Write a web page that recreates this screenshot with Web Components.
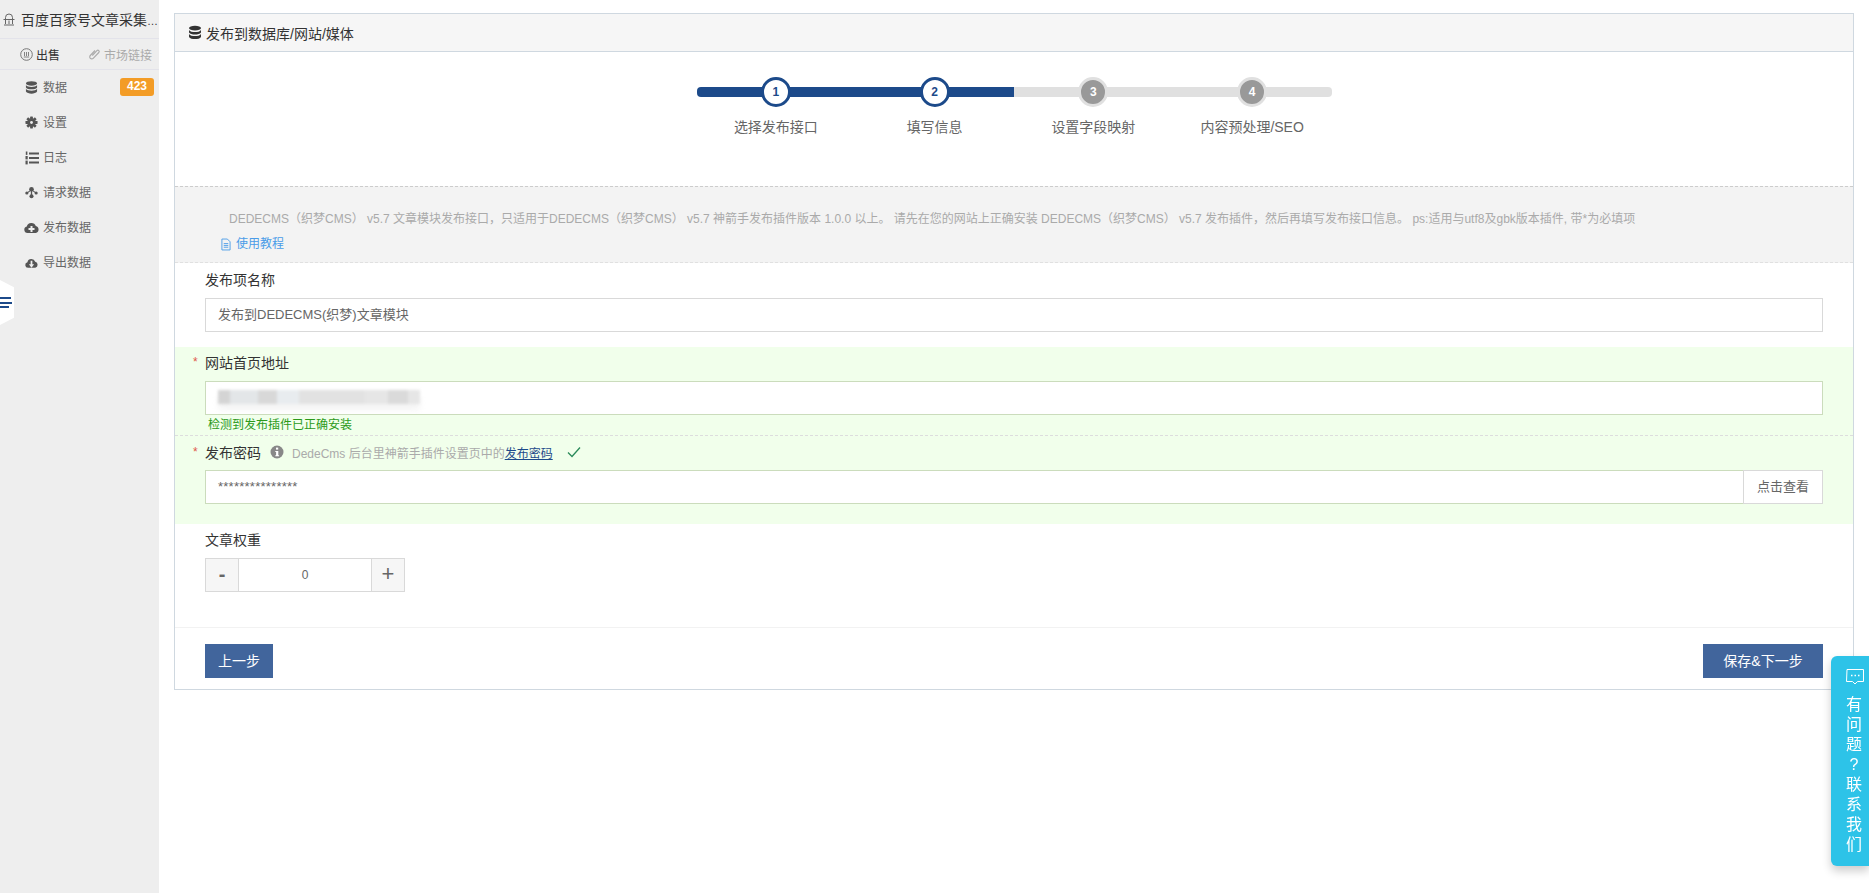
<!DOCTYPE html>
<html lang="zh">
<head>
<meta charset="utf-8">
<title>发布到数据库/网站/媒体</title>
<style>
    html, body { margin: 0; height: 100%; background: #fff; }
    body { font-family: "Liberation Sans", "Noto Sans CJK SC", sans-serif; font-size: 13px; color: #333; overflow: hidden; }
</style>
</head>
<body>
<app-shell>
    <app-sidebar slot="side">
        <span slot="title">百度百家号文章采集<small style="font-size:11px">…</small></span>
        <nav-item label="数据" badge="423">
            <svg slot="icon" viewBox="0 0 14 14" width="13" height="13" fill="#555"><ellipse cx="7" cy="2.600" rx="6" ry="2.400"/><path d="M1 4.400C2 6 4.500 6.500 7 6.500S12 6 13 4.400V7c-1 1.500-3.500 2-6 2S2 8.500 1 7z"/><path d="M1 8.400c1 1.600 3.500 2.100 6 2.100s5-.5 6-2.100V11.400c-1 1.500-3.500 2.200-6 2.200s-5-.7-6-2.200z"/></svg>
        </nav-item>
        <nav-item label="设置">
            <svg slot="icon" viewBox="0 0 14 14" width="13" height="13"><g fill="#555"><rect x="5.500" y="0.500" width="3" height="13" rx=".5"/><rect x="5.500" y="0.500" width="3" height="13" rx=".5" transform="rotate(45 7 7)"/><rect x="5.500" y="0.500" width="3" height="13" rx=".5" transform="rotate(90 7 7)"/><rect x="5.500" y="0.500" width="3" height="13" rx=".5" transform="rotate(135 7 7)"/></g><circle cx="7" cy="7" r="3.400" fill="none" stroke="#555" stroke-width="2.200"/><circle cx="7" cy="7" r="1.500" fill="#eee"/></svg>
        </nav-item>
        <nav-item label="日志">
            <svg slot="icon" viewBox="0 0 14 14" width="14" height="14"><g fill="#555"><rect x="4" y="1.500" width="10" height="2"/><rect x="4" y="6" width="10" height="2"/><rect x="4" y="10.500" width="10" height="2"/><rect x="0.800" y="0.500" width="1.600" height="3.400"/><rect x="0.500" y="5" width="2.200" height="3.400"/><rect x="0.500" y="9.600" width="2.200" height="3.800"/></g></svg>
        </nav-item>
        <nav-item label="请求数据">
            <svg slot="icon" viewBox="0 0 14 14" width="13" height="13" fill="#555"><circle cx="7" cy="3.500" r="2.500"/><circle cx="2" cy="7.500" r="1.700"/><circle cx="12" cy="7.500" r="1.700"/><circle cx="7" cy="11" r="2.200"/><path d="M6.300 4h1.400v7H6.300zM2 7l5-3.500.6.900-5 3.500zM12 7L7 3.500l-.6.900 5 3.500z"/></svg>
        </nav-item>
        <nav-item label="发布数据">
            <svg slot="icon" viewBox="0 0 15 13" width="15" height="13"><path fill="#555" d="M3.500 12A3.300 3.300 0 0 1 2.800 5.500 4.700 4.700 0 0 1 11.800 5 3.600 3.600 0 0 1 11.800 12z"/><path fill="#eee" d="M6.500 5h2v2h2v2h-2v2h-2V9h-2V7h2z"/></svg>
        </nav-item>
        <nav-item label="导出数据">
            <svg slot="icon" viewBox="0 0 15 13" width="13" height="12"><path fill="#555" d="M3.500 12A3.300 3.300 0 0 1 2.800 5.500 4.700 4.700 0 0 1 11.800 5 3.600 3.600 0 0 1 11.800 12z"/><path fill="#eee" d="M6.500 4h2v4h2l-3 4-3-4h2z"/></svg>
        </nav-item>
    </app-sidebar>

    <publish-card>
        <svg slot="head-icon" viewBox="0 0 14 14" width="14" height="15" fill="#333"><ellipse cx="7" cy="2.600" rx="6" ry="2.400"/><path d="M1 4.400C2 6 4.500 6.500 7 6.500S12 6 13 4.400V7c-1 1.500-3.500 2-6 2S2 8.500 1 7z"/><path d="M1 8.400c1 1.600 3.500 2.100 6 2.100s5-.5 6-2.100V11.400c-1 1.500-3.500 2.200-6 2.200s-5-.7-6-2.200z"/></svg>
        <span slot="head">发布到数据库/网站/媒体</span>

        <step-bar slot="steps">
            <step-item num="1" label="选择发布接口" done first></step-item>
            <step-item num="2" label="填写信息" done></step-item>
            <step-item num="3" label="设置字段映射"></step-item>
            <step-item num="4" label="内容预处理/SEO" last></step-item>
        </step-bar>

        <info-note slot="note">
            DEDECMS（织梦CMS） v5.7 文章模块发布接口，只适用于DEDECMS（织梦CMS） v5.7 神箭手发布插件版本 1.0.0 以上。 请先在您的网站上正确安装 DEDECMS（织梦CMS） v5.7 发布插件，然后再填写发布接口信息。 ps:适用与utf8及gbk版本插件, 带*为必填项
            <span slot="link">使用教程</span>
        </info-note>

        <form-field style="--pad: 6px 30px 15px; --gap: 9px">
            <span slot="label">发布项名称</span>
            <text-box>发布到DEDECMS(织梦)文章模块</text-box>
        </form-field>

        <ok-group>
            <form-field required style="--pad: 5px 30px 0; --gap: 9px; --box-border: #cbdcbc">
                <span slot="label">网站首页地址</span>
                <text-box><blur-url></blur-url></text-box>
                <span slot="hint">检测到发布插件已正确安装</span>
            </form-field>
            <form-field required divided style="--pad: 6px 30px 20px; --gap: 8px; --box-border: #cbdcbc">
                <span slot="label">发布密码</span>
                <field-tip slot="tip">DedeCms 后台里神箭手插件设置页中的<u>发布密码</u></field-tip>
                <text-box addon="点击查看"><span style="letter-spacing:.25px">***************</span></text-box>
            </form-field>
        </ok-group>

        <form-field style="--pad: 5px 30px 0; --gap: 9px">
            <span slot="label">文章权重</span>
            <num-stepper value="0"></num-stepper>
        </form-field>

        <wizard-foot slot="foot">
            <flat-button>上一步</flat-button>
            <flat-button wide>保存&amp;下一步</flat-button>
        </wizard-foot>
    </publish-card>
</app-shell>
<help-float></help-float>

<script>
class AppShell extends HTMLElement {
    constructor () {
        super();
        this.attachShadow( { mode: "open" } );
        this.shadowRoot.innerHTML = `
            <style>
                :host {
                    display: grid;
                    grid-template-columns: 159px 1fr;
                    height: 893px;
                }
                main {
                    padding: 13px 15px 0;
                    min-width: 0;
                }
            </style>
            <slot name="side"></slot>
            <main><slot></slot></main>
        `;
    }
}
customElements.define( "app-shell", AppShell );

class AppSidebar extends HTMLElement {
    constructor () {
        super();
        this.attachShadow( { mode: "open" } );
        this.shadowRoot.innerHTML = `
            <style>
                :host {
                    display: block;
                    position: relative;
                    background: #eee;
                    font-size: 12px;
                }
                #title {
                    display: flex;
                    align-items: center;
                    gap: 6px;
                    height: 38px;
                    padding-left: 3px;
                    border-bottom: 1px solid #e3e3ea;
                    font-size: 14px;
                    color: #333;
                }
                #title svg { flex: none; }
                #title div { white-space: nowrap; }
                #tabs {
                    display: flex;
                    align-items: center;
                    height: 30px;
                    padding-left: 20px;
                    border-bottom: 1px solid #e3e3ea;
                }
                #tabs span {
                    display: flex;
                    align-items: center;
                    gap: 3px;
                }
                #sell { color: #333; font-size: 12px; width: 68px; }
                #market { color: #aaa; }
                #toggle {
                    position: absolute;
                    left: 0;
                    top: 280px;
                    width: 14px;
                    height: 45px;
                    background: #fff;
                    clip-path: polygon(0 0, 100% 16%, 100% 84%, 0 100%);
                }
                #toggle i {
                    position: absolute;
                    left: 0;
                    height: 2px;
                    background: #1c4a8a;
                }
            </style>
            <div id="title">
                <svg viewBox="0 0 12 13" width="12" height="13" fill="none" stroke="#666" stroke-width="1"><path d="M2.500 6V4.500a3.500 3.500 0 0 1 7 0V6"/><path d="M.5 6.500h11M2.500 7v4M6 7.500V11M9.500 7v4M1 12h10"/></svg>
                <div><slot name="title"></slot></div>
            </div>
            <div id="tabs">
                <span id="sell">
                    <svg viewBox="0 0 13 13" width="13" height="13" fill="none" stroke="#777"><circle cx="6.500" cy="6.500" r="5.800"/><path d="M4.500 4v4M6.500 4v4M8.500 4v4M3.800 9h5.400" stroke-width=".9"/></svg>
                    出售
                </span>
                <span id="market">
                    <svg viewBox="0 0 13 13" width="13" height="13" fill="none" stroke="#aaa" stroke-width="1.100"><path d="M7 2.500 2.300 7.500a2 2 0 0 0 2.900 2.800l5.600-5.800a1.300 1.300 0 0 0-1.900-1.900L4.300 7.500"/></svg>
                    市场链接
                </span>
            </div>
            <slot></slot>
            <div id="toggle">
                <i style="top:17px;width:11px"></i>
                <i style="top:22px;width:12px"></i>
                <i style="top:26px;width:9px"></i>
            </div>
        `;
    }
}
customElements.define( "app-sidebar", AppSidebar );

class NavItem extends HTMLElement {
    constructor () {
        super();
        this.attachShadow( { mode: "open" } );
        this.shadowRoot.innerHTML = `
            <style>
                :host {
                    display: flex;
                    align-items: center;
                    height: 35px;
                    padding: 0 5px 0 24px;
                    color: #666;
                    font-size: 12px;
                }
                #icon {
                    display: flex;
                    justify-content: center;
                    width: 15px;
                    margin-right: 4px;
                }
                #label { flex: 1; margin-top: -2px; }
                #badge {
                    width: 34px;
                    height: 18px;
                    margin-top: -1px;
                    border-radius: 3px;
                    background: #f39c26;
                    color: #fff;
                    font-weight: bold;
                    line-height: 17px;
                    text-align: center;
                }
                #badge:empty { display: none; }
            </style>
            <span id="icon"><slot name="icon"></slot></span>
            <span id="label"></span>
            <span id="badge"></span>
        `;
    }

    connectedCallback() {
        this.shadowRoot.getElementById( "label" ).textContent = this.getAttribute( "label" );
        this.shadowRoot.getElementById( "badge" ).textContent = this.getAttribute( "badge" ) || "";
    }
}
customElements.define( "nav-item", NavItem );

class PublishCard extends HTMLElement {
    constructor () {
        super();
        this.attachShadow( { mode: "open" } );
        this.shadowRoot.innerHTML = `
            <style>
                :host {
                    display: block;
                    border: 1px solid #cfd8e0;
                    background: #fff;
                }
                header {
                    display: flex;
                    align-items: center;
                    gap: 4px;
                    height: 37px;
                    padding-left: 13px;
                    border-bottom: 1px solid #cfd8e0;
                    background: #f6f6f6;
                    font-size: 14px;
                    color: #333;
                }
            </style>
            <header><slot name="head-icon"></slot><slot name="head"></slot></header>
            <slot name="steps"></slot>
            <slot name="note"></slot>
            <slot></slot>
            <slot name="foot"></slot>
        `;
    }
}
customElements.define( "publish-card", PublishCard );

class StepBar extends HTMLElement {
    constructor () {
        super();
        this.attachShadow( { mode: "open" } );
        this.shadowRoot.innerHTML = `
            <style>
                :host {
                    display: flex;
                    justify-content: center;
                    height: 109px;
                    padding-top: 25px;
                }
            </style>
            <slot></slot>
        `;
    }
}
customElements.define( "step-bar", StepBar );

class StepItem extends HTMLElement {
    constructor () {
        super();
        this.attachShadow( { mode: "open" } );
        this.shadowRoot.innerHTML = `
            <style>
                :host {
                    display: block;
                    width: 158.750px;
                    --line: #e0e0e0;
                    --ring: #e0e0e0;
                    --fill: #999;
                    --num: #fff;
                }
                :host([done]) {
                    --line: #1c4a8a;
                    --ring: #1c4a8a;
                    --fill: #fff;
                    --num: #1c4a8a;
                }
                #bar {
                    position: relative;
                    display: flex;
                    justify-content: center;
                    height: 30px;
                }
                #bar::before {
                    content: "";
                    position: absolute;
                    left: 0;
                    right: 0;
                    top: 10px;
                    height: 10px;
                    background: var(--line);
                }
                :host([first]) #bar::before { border-radius: 4px 0 0 4px; }
                :host([last]) #bar::before { border-radius: 0 4px 4px 0; }
                #dot {
                    position: relative;
                    box-sizing: border-box;
                    width: 30px;
                    height: 30px;
                    border: 3px solid var(--ring);
                    border-radius: 50%;
                    background: var(--fill);
                    color: var(--num);
                    font-size: 12px;
                    font-weight: bold;
                    line-height: 24px;
                    text-align: center;
                }
                #label {
                    margin-top: 9px;
                    font-size: 14px;
                    line-height: 22px;
                    color: #666;
                    text-align: center;
                }
            </style>
            <div id="bar"><div id="dot"></div></div>
            <div id="label"></div>
        `;
    }

    connectedCallback() {
        this.shadowRoot.getElementById( "dot" ).textContent = this.getAttribute( "num" );
        this.shadowRoot.getElementById( "label" ).textContent = this.getAttribute( "label" );
    }
}
customElements.define( "step-item", StepItem );

class InfoNote extends HTMLElement {
    constructor () {
        super();
        this.attachShadow( { mode: "open" } );
        this.shadowRoot.innerHTML = `
            <style>
                :host {
                    display: block;
                    box-sizing: border-box;
                    height: 77px;
                    padding: 22px 0 0 54px;
                    border-top: 1px dashed #ccc;
                    border-bottom: 1px dashed #e0e0e0;
                    background: #f3f3f3;
                    font-size: 12px;
                    line-height: 20px;
                    color: #aaa;
                }
                #link {
                    display: flex;
                    align-items: center;
                    gap: 5px;
                    margin: 5px 0 0 -8px;
                    color: #4a9ce8;
                }
            </style>
            <div><slot></slot></div>
            <div id="link">
                <svg viewBox="0 0 11 13" width="10" height="13" fill="none" stroke="#4a9ce8"><path d="M1 .5h6l3 3v9H1zM3 5.500h5M3 7.500h5M3 9.500h5"/></svg>
                <slot name="link"></slot>
            </div>
        `;
    }
}
customElements.define( "info-note", InfoNote );

class FormField extends HTMLElement {
    constructor () {
        super();
        this.attachShadow( { mode: "open" } );
        this.shadowRoot.innerHTML = `
            <style>
                :host {
                    display: block;
                    position: relative;
                    padding: var(--pad, 8px 30px);
                    font-size: 14px;
                    color: #333;
                }
                :host([divided]) { border-top: 1px dashed #ddd; }
                #head {
                    display: flex;
                    align-items: center;
                    height: 20px;
                    margin-bottom: var(--gap, 8px);
                }
                #star {
                    display: none;
                    position: absolute;
                    left: 18px;
                    color: #e0584a;
                    font-size: 12px;
                }
                :host([required]) #star { display: block; }
                #hint {
                    display: block;
                    padding-left: 3px;
                    font-size: 12px;
                    line-height: 20px;
                    color: #2b9a1a;
                }
                #hint slot { display: block; }
                #hintwrap:not(.on) { display: none; }
            </style>
            <div id="head"><span id="star">*</span><slot name="label"></slot><slot name="tip"></slot></div>
            <slot></slot>
            <div id="hintwrap"><div id="hint"><slot name="hint"></slot></div></div>
        `;
    }

    connectedCallback() {
        if ( this.querySelector( "[slot=hint]" ) ) {
            this.shadowRoot.getElementById( "hintwrap" ).classList.add( "on" );
        }
    }
}
customElements.define( "form-field", FormField );

class FieldTip extends HTMLElement {
    constructor () {
        super();
        this.attachShadow( { mode: "open" } );
        this.shadowRoot.innerHTML = `
            <style>
                :host {
                    display: flex;
                    align-items: center;
                    margin-left: 9px;
                    font-size: 12px;
                    color: #aaa;
                }
                svg { flex: none; }
                #text { margin-left: 8px; }
                ::slotted(u) { color: #1c4a8a; }
                #ok { margin-left: 14px; }
            </style>
            <svg viewBox="0 0 14 14" width="14" height="14"><circle cx="7" cy="7" r="6.500" fill="#888"/><rect x="6" y="2.600" width="2.200" height="2" fill="#fff"/><path fill="#fff" d="M5.300 6h3v4.300h.8v1H5.300v-1h.8V7h-.8z"/></svg>
            <span id="text"><slot></slot></span>
            <svg id="ok" viewBox="0 0 14 12" width="14" height="12" fill="none" stroke="#2a8a5a" stroke-width="1.300"><path d="M1 6.500 5 10.500 13 1.500"/></svg>
        `;
    }
}
customElements.define( "field-tip", FieldTip );

class TextBox extends HTMLElement {
    constructor () {
        super();
        this.attachShadow( { mode: "open" } );
        this.shadowRoot.innerHTML = `
            <style>
                :host {
                    display: flex;
                    box-sizing: border-box;
                    height: 34px;
                    border: 1px solid var(--box-border, #d9d9d9);
                    background: #fff;
                    font-size: 13px;
                    color: #666;
                }
                #value {
                    flex: 1;
                    padding-left: 12px;
                    line-height: 31px;
                    overflow: hidden;
                }
                #addon {
                    flex: none;
                    box-sizing: border-box;
                    width: 80px;
                    margin: -1px -1px -1px 0;
                    height: 34px;
                    border: 1px solid #d9d9d9;
                    line-height: 31px;
                    text-align: center;
                }
                #addon:empty { display: none; }
            </style>
            <div id="value"><slot></slot></div>
            <div id="addon"></div>
        `;
    }

    connectedCallback() {
        this.shadowRoot.getElementById( "addon" ).textContent = this.getAttribute( "addon" ) || "";
    }
}
customElements.define( "text-box", TextBox );

class BlurUrl extends HTMLElement {
    constructor () {
        super();
        this.attachShadow( { mode: "open" } );
        this.shadowRoot.innerHTML = `
            <style>
                :host {
                    display: inline-block;
                    vertical-align: top;
                    width: 202px;
                    height: 14px;
                    margin-top: 8px;
                    filter: blur(1.500px);
                    background: linear-gradient(90deg, #d4d4d4 0 6%, #e3e6e8 6% 20%, #d8d8d8 20% 29%, #e8ecef 29% 40%, #e2e2e2 40% 73%, #e6e6e6 73% 84%, #dadada 84% 94%, #e6e6e6 94% 100%);
                    box-shadow: 0 6px 6px #f4f4f4;
                }
            </style>
        `;
    }
}
customElements.define( "blur-url", BlurUrl );

class OkGroup extends HTMLElement {
    constructor () {
        super();
        this.attachShadow( { mode: "open" } );
        this.shadowRoot.innerHTML = `
            <style>
                :host {
                    display: block;
                    background: #f1ffeb;
                }
            </style>
            <slot></slot>
        `;
    }
}
customElements.define( "ok-group", OkGroup );

class NumStepper extends HTMLElement {
    constructor () {
        super();
        this.attachShadow( { mode: "open" } );
        this.shadowRoot.innerHTML = `
            <style>
                :host {
                    display: grid;
                    grid-template-columns: 34px 132px 34px;
                    box-sizing: border-box;
                    width: 200px;
                    height: 34px;
                    color: #666;
                }
                div {
                    box-sizing: border-box;
                    border: 1px solid #d9d9d9;
                    background: #f6f6f6;
                    text-align: center;
                    font-size: 20px;
                    line-height: 30px;
                    font-weight: bold;
                }
                #plus { font-size: 22px; font-weight: normal; }
                #val {
                    border-left: 0;
                    border-right: 0;
                    background: #fff;
                    font-size: 12px;
                    font-weight: normal;
                    line-height: 32px;
                }
            </style>
            <div>-</div>
            <div id="val"></div>
            <div id="plus">+</div>
        `;
    }

    connectedCallback() {
        this.shadowRoot.getElementById( "val" ).textContent = this.getAttribute( "value" );
    }
}
customElements.define( "num-stepper", NumStepper );

class WizardFoot extends HTMLElement {
    constructor () {
        super();
        this.attachShadow( { mode: "open" } );
        this.shadowRoot.innerHTML = `
            <style>
                :host {
                    display: flex;
                    justify-content: space-between;
                    margin-top: 35px;
                    padding: 16px 30px 11px;
                    border-top: 1px solid #f2f2f2;
                }
            </style>
            <slot></slot>
        `;
    }
}
customElements.define( "wizard-foot", WizardFoot );

class FlatButton extends HTMLElement {
    constructor () {
        super();
        this.attachShadow( { mode: "open" } );
        this.shadowRoot.innerHTML = `
            <style>
                :host {
                    display: block;
                    width: 68px;
                    height: 34px;
                    background: #41659c;
                    color: #fff;
                    font-size: 14px;
                    line-height: 34px;
                    text-align: center;
                }
                :host([wide]) { width: 120px; }
            </style>
            <slot></slot>
        `;
    }
}
customElements.define( "flat-button", FlatButton );

class HelpFloat extends HTMLElement {
    constructor () {
        super();
        this.attachShadow( { mode: "open" } );
        this.shadowRoot.innerHTML = `
            <style>
                :host {
                    position: fixed;
                    right: 0;
                    top: 656px;
                    box-sizing: border-box;
                    width: 38px;
                    height: 210px;
                    padding-top: 13px;
                    border-radius: 6px 0 0 6px;
                    background: #2dc3e8;
                    box-shadow: 0 5px 10px rgba(0, 0, 0, 0.2);
                    color: #fff;
                    font-size: 16px;
                    line-height: 20px;
                }
                svg { display: block; margin: 0 0 10px 15px; }
                div {
                    width: 16px;
                    margin-left: 15px;
                    line-break: anywhere;
                    text-align: center;
                }
            </style>
            <svg viewBox="0 0 18 16" width="18" height="16" fill="none" stroke="#fff"><path d="M1 .5h16.500v12h-6l-2.500 2.500-2.500-2.500h-6z"/><path d="M5 6.500h1.500M8.500 6.500h1.500M12 6.500h1.500" stroke-width="1.500"/></svg>
            <div>有问题?联系我们</div>
        `;
    }
}
customElements.define( "help-float", HelpFloat );
</script>
</body>
</html>
